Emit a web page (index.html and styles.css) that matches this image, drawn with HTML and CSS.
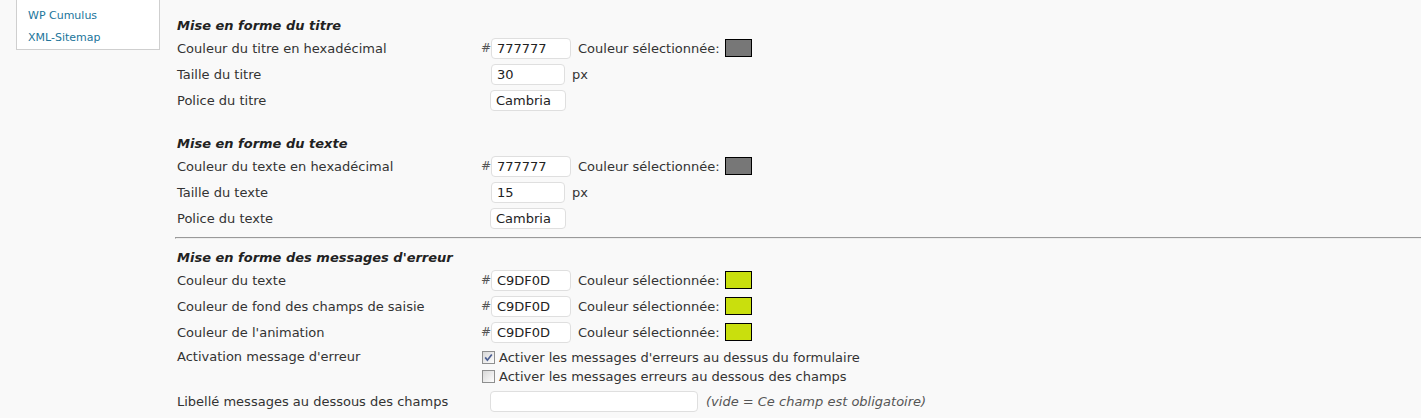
FILE: index.html
```html
<!DOCTYPE html>
<html lang="fr">
<head>
<meta charset="utf-8">
<title>Options</title>
<link rel="stylesheet" href="styles.css">
</head>
<body>
<aside class="sidebar">
  <ul class="menu">
    <li><a href="#">WP Cumulus</a></li>
    <li><a href="#">XML-Sitemap</a></li>
  </ul>
</aside>
<main class="main">
  <section class="section first">
    <h3 class="sec-title">Mise en forme du titre</h3>
    <div class="row">
      <span class="label">Couleur du titre en hexadécimal</span>
      <span class="field"><span class="hash">#</span><input class="inp w-color" type="text" value="777777"><span class="sel">Couleur sélectionnée:</span><span class="swatch gray"></span></span>
    </div>
    <div class="row">
      <span class="label">Taille du titre</span>
      <span class="field"><input class="inp w-size indent" type="text" value="30"><span class="unit">px</span></span>
    </div>
    <div class="row">
      <span class="label">Police du titre</span>
      <span class="field"><input class="inp w-font indent-font" type="text" value="Cambria"></span>
    </div>
  </section>

  <section class="section second">
    <h3 class="sec-title">Mise en forme du texte</h3>
    <div class="row">
      <span class="label">Couleur du texte en hexadécimal</span>
      <span class="field"><span class="hash">#</span><input class="inp w-color" type="text" value="777777"><span class="sel">Couleur sélectionnée:</span><span class="swatch gray"></span></span>
    </div>
    <div class="row">
      <span class="label">Taille du texte</span>
      <span class="field"><input class="inp w-size indent" type="text" value="15"><span class="unit">px</span></span>
    </div>
    <div class="row">
      <span class="label">Police du texte</span>
      <span class="field"><input class="inp w-font indent-font" type="text" value="Cambria"></span>
    </div>
  </section>

  <hr class="sep">

  <section class="section third">
    <h3 class="sec-title">Mise en forme des messages d'erreur</h3>
    <div class="row">
      <span class="label">Couleur du texte</span>
      <span class="field"><span class="hash">#</span><input class="inp w-color" type="text" value="C9DF0D"><span class="sel">Couleur sélectionnée:</span><span class="swatch lime"></span></span>
    </div>
    <div class="row">
      <span class="label">Couleur de fond des champs de saisie</span>
      <span class="field"><span class="hash">#</span><input class="inp w-color" type="text" value="C9DF0D"><span class="sel">Couleur sélectionnée:</span><span class="swatch lime"></span></span>
    </div>
    <div class="row">
      <span class="label">Couleur de l'animation</span>
      <span class="field"><span class="hash">#</span><input class="inp w-color" type="text" value="C9DF0D"><span class="sel">Couleur sélectionnée:</span><span class="swatch lime"></span></span>
    </div>
    <div class="row-multi">
      <span class="label">Activation message d'erreur</span>
      <span class="field-col">
        <span class="check-line">
          <span class="checkbox"><svg width="13" height="13" viewBox="0 0 13 13"><defs><linearGradient id="cbg" x1="0" y1="0" x2="1" y2="1"><stop offset="0" stop-color="#d6d6d6"/><stop offset="1" stop-color="#ffffff"/></linearGradient></defs><rect x="0.5" y="0.5" width="12" height="12" fill="url(#cbg)" stroke="#8e8f8f"/><path d="M3.2 6.4 L5.4 9.2 L9.8 3.4" fill="none" stroke="#4c5f92" stroke-width="1.7"/></svg></span>
          <span class="check-text">Activer les messages d'erreurs au dessus du formulaire</span>
        </span>
        <span class="check-line">
          <span class="checkbox"><svg width="13" height="13" viewBox="0 0 13 13"><defs><linearGradient id="cbg2" x1="0" y1="0" x2="1" y2="1"><stop offset="0" stop-color="#d6d6d6"/><stop offset="1" stop-color="#ffffff"/></linearGradient></defs><rect x="0.5" y="0.5" width="12" height="12" fill="url(#cbg2)" stroke="#8e8f8f"/></svg></span>
          <span class="check-text">Activer les messages erreurs au dessous des champs</span>
        </span>
      </span>
    </div>
    <div class="row last">
      <span class="label">Libellé messages au dessous des champs</span>
      <span class="field"><input class="inp w-long indent-font" type="text" value=""><em class="hint">(vide = Ce champ est obligatoire)</em></span>
    </div>
  </section>
</main>
</body>
</html>
```

FILE: styles.css
```css
html, body {
  margin: 0;
  padding: 0;
  background: #f9f9f9;
}

body {
  display: flex;
  align-items: flex-start;
  font-family: "DejaVu Sans", Verdana, sans-serif;
  font-size: 13px;
  color: #333;
  overflow: hidden;
}

.sidebar {
  margin-left: 16px;
  width: 144px;
  flex: none;
}

.menu {
  list-style: none;
  margin: 0;
  padding: 5px 0 0 11px;
  background: #fff;
  border: 1px solid #cfcfcf;
  border-top: none;
}

.menu li {
  height: 22px;
  line-height: 22px;
  font-size: 11px;
}

.menu a {
  color: #21759b;
  text-decoration: none;
}

.main {
  flex: 1;
  margin-left: 15px;
  padding-top: 12px;
}

.section {
  padding-left: 2px;
}

.second {
  margin-top: 17px;
}

.sec-title {
  margin: 0;
  height: 23px;
  line-height: 27px;
  font-size: 13px;
  font-weight: bold;
  font-style: italic;
  color: #222;
}

.row {
  display: flex;
  align-items: center;
  height: 26px;
}

.row.last {
  margin-top: 1px;
}

.label {
  width: 304px;
  flex: none;
}

.field {
  display: flex;
  align-items: center;
}

.hash {
  width: 10px;
  flex: none;
  color: #555;
  font-size: 12px;
}

.inp {
  box-sizing: border-box;
  height: 21px;
  margin: 0;
  padding: 0 0 0 5px;
  border: 1px solid #dfdfdf;
  border-radius: 4px;
  background: #fff;
  font-family: "DejaVu Sans", Verdana, sans-serif;
  font-size: 13px;
  color: #222;
  outline: none;
}

.w-color { width: 80px; }
.w-size { width: 74px; }
.w-font { width: 76px; }
.w-long { width: 208px; }

.indent { margin-left: 10px; }
.indent-font { margin-left: 9px; }

.sel {
  margin-left: 7px;
  margin-right: 5px;
  color: #333;
}

.swatch {
  box-sizing: border-box;
  width: 27px;
  height: 18px;
  border: 1px solid #000;
}

.swatch.gray { background: #777777; }
.swatch.lime { background: #c9df0d; }

.unit {
  margin-left: 7px;
}

.sep {
  margin: 6px 0 5px 0;
  height: 0;
  border: none;
  border-top: 1px solid #9a9a9a;
  border-bottom: 1px solid #eeeeee;
  border-left: 1px solid #9a9a9a;
}

.row-multi {
  display: flex;
  align-items: flex-start;
  padding-top: 3px;
}

.row-multi .label {
  line-height: 18px;
}

.field-col {
  display: flex;
  flex-direction: column;
}

.check-line {
  display: flex;
  align-items: center;
  height: 21px;
}

.check-line:first-child {
  height: 18px;
}

.checkbox {
  width: 13px;
  height: 13px;
  margin-left: 1px;
  display: flex;
}

.check-text {
  margin-left: 4px;
}

.hint {
  margin-left: 8px;
  color: #555;
}
```
